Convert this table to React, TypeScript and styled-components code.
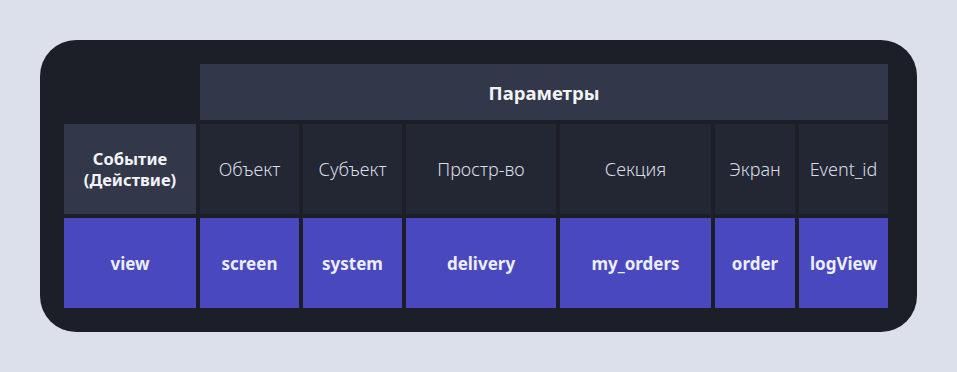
import styled, { createGlobalStyle } from 'styled-components';

const GlobalStyle = createGlobalStyle`
  html, body {
    margin: 0;
    padding: 0;
    background: #dce0eb;
  }
  body {
    font-family: 'Noto Sans', 'DejaVu Sans', sans-serif;
  }
`;

const Page = styled.div`
  width: 957px;
  height: 372px;
  padding: 40px;
  box-sizing: border-box;
  background: #dce0eb;
`;

const Panel = styled.div`
  width: 877px;
  height: 292px;
  box-sizing: border-box;
  padding: 24px 29px 24px 24px;
  background: #1c1f28;
  border-radius: 36px;
`;

const Table = styled.div`
  display: grid;
  grid-template-columns: 132px 99px 99px 150px 151px 80px 89px;
  grid-template-rows: 56px 90px 90px;
  gap: 4px;
`;

const Cell = styled.div`
  display: flex;
  align-items: center;
  justify-content: center;
  text-align: center;
`;

const Spacer = styled.div``;

const GroupHeader = styled(Cell)`
  grid-column: 2 / 8;
  background: #323749;
  color: #f2f3f7;
  font-size: 18.5px;
  font-weight: 700;
`;

const ActionHeader = styled(Cell)`
  background: #323749;
  color: #f2f3f7;
  font-size: 16.5px;
  font-weight: 700;
  line-height: 21px;
`;

const ParamHeader = styled(Cell)`
  background: #232734;
  color: #dadde5;
  font-size: 18px;
  font-weight: 300;
`;

const Value = styled(Cell)`
  background: #4a48bf;
  color: #eceefa;
  font-size: 17px;
  font-weight: 700;
`;

const params = ['Объект', 'Субъект', 'Простр-во', 'Секция', 'Экран', 'Event_id'];
const values = ['screen', 'system', 'delivery', 'my_orders', 'order', 'logView'];

export default function App() {
  return (
    <Page>
      <GlobalStyle />
      <Panel>
        <Table>
          <Spacer />
          <GroupHeader>Параметры</GroupHeader>
          <ActionHeader>
            Событие
            <br />
            (Действие)
          </ActionHeader>
          {params.map((p) => (
            <ParamHeader key={p}>{p}</ParamHeader>
          ))}
          <Value>view</Value>
          {values.map((v) => (
            <Value key={v}>{v}</Value>
          ))}
        </Table>
      </Panel>
    </Page>
  );
}
